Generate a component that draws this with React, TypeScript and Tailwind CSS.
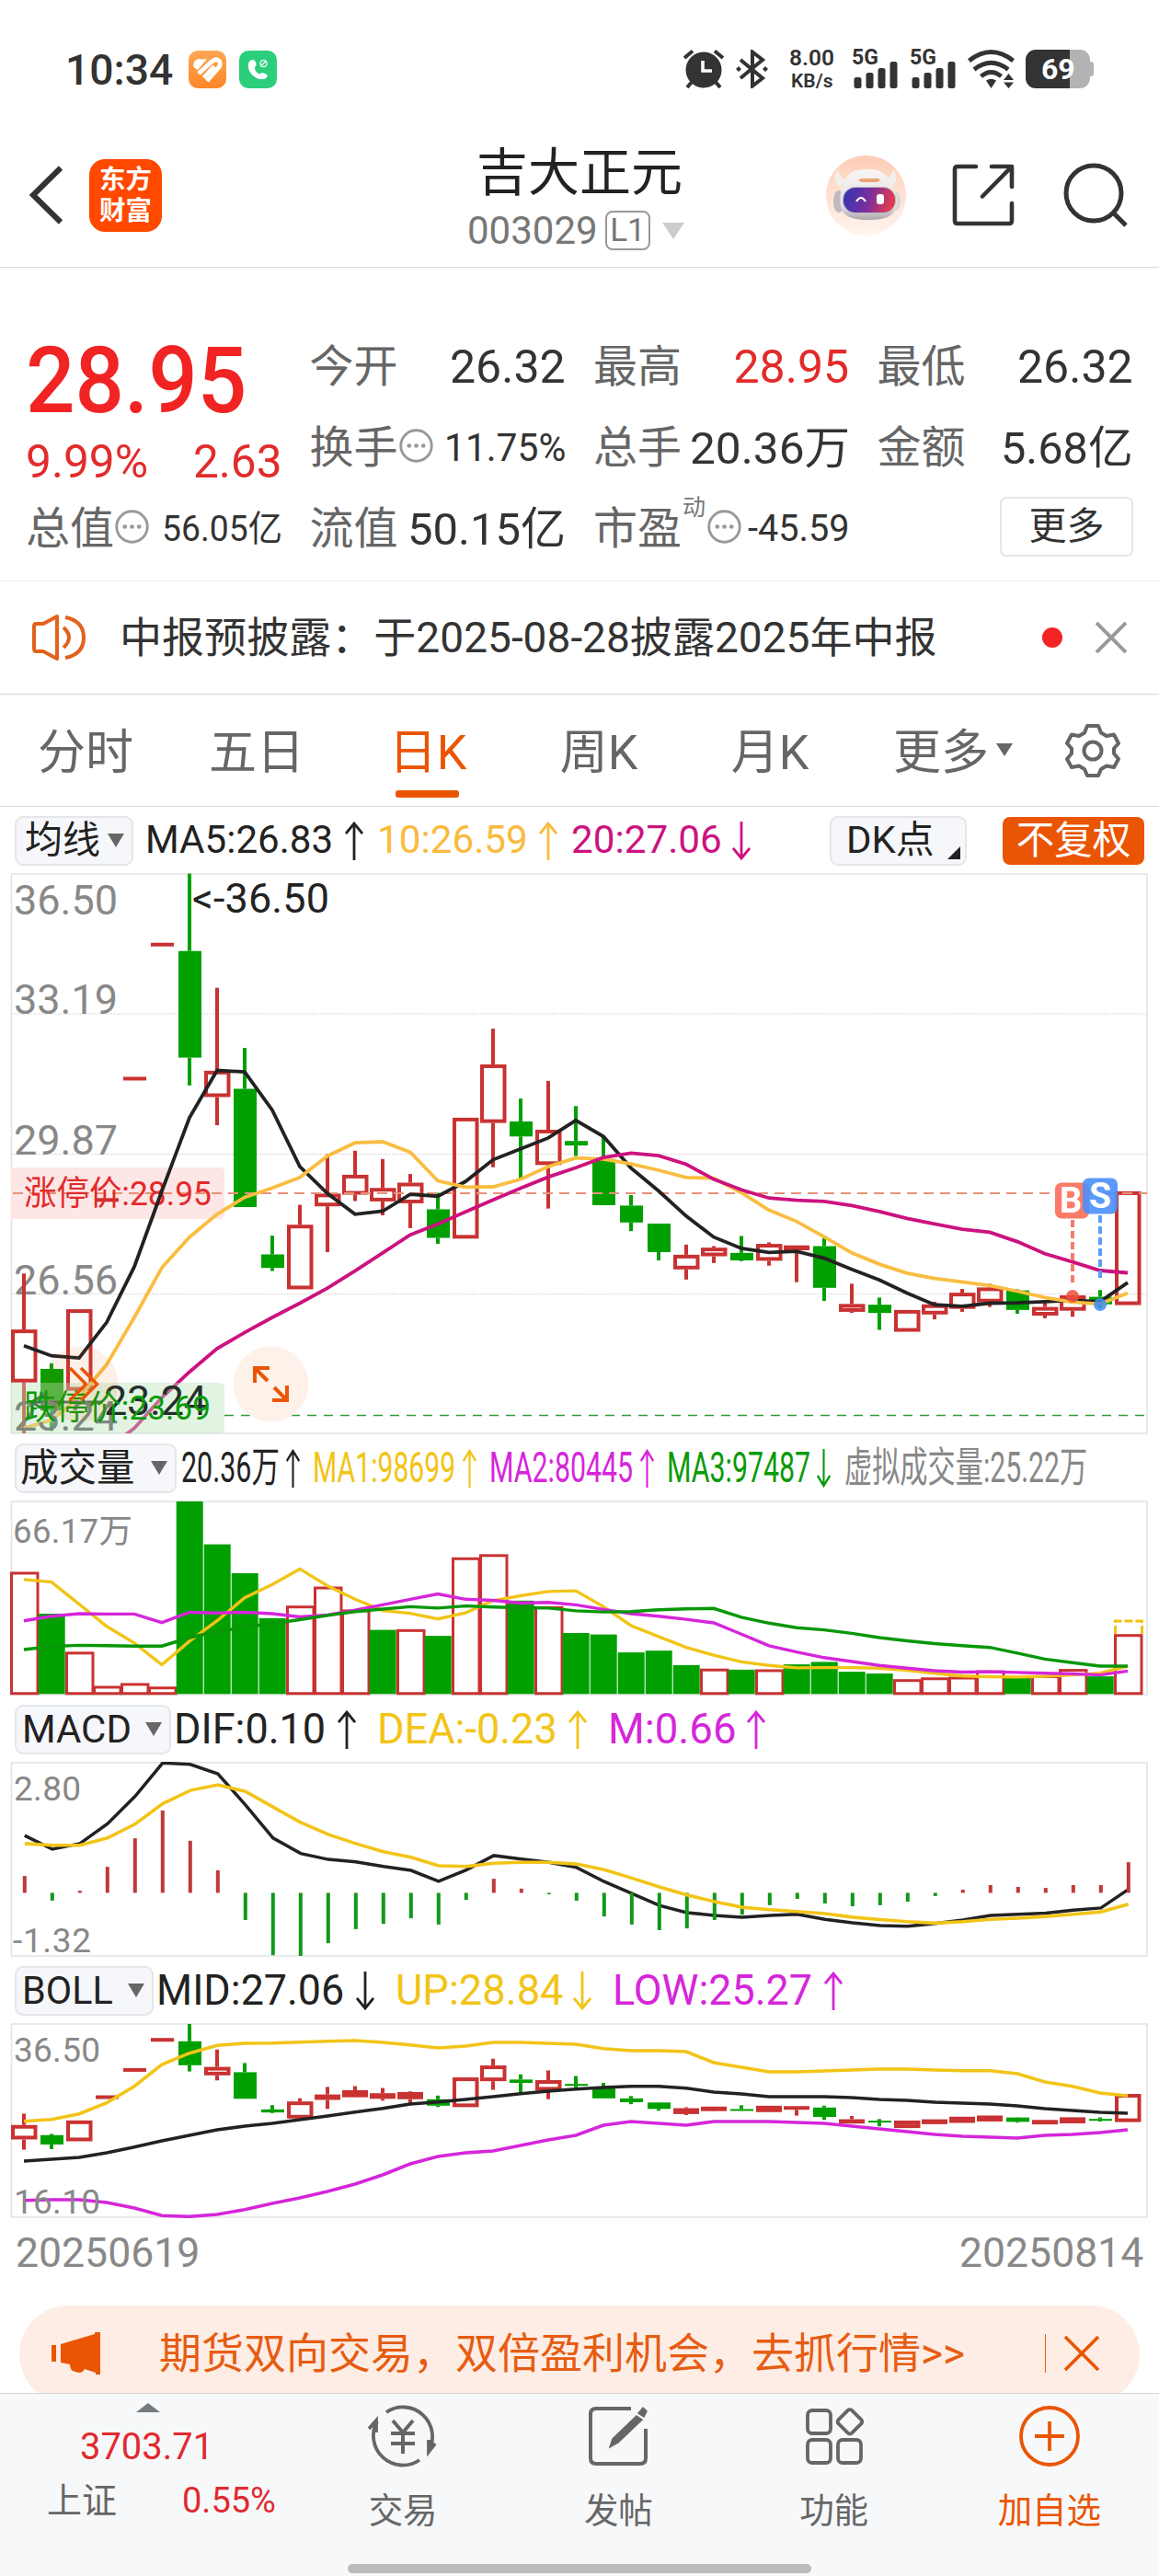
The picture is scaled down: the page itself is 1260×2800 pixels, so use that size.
import { ReactNode, useLayoutEffect, useRef, useState } from 'react';

type Candle = ['u' | 'd', number, number, number, number]; // direction, high, body top, body bottom, low

const RED = '#c93232';
const GREEN = '#00a000';

// Session i sits at x = 26 + 30i in every pane.
const cx = (i: number) => 26 + 30 * i;
const priceY = (v: number) => 930 + v / 2.45;
const volY = (v: number) => 1560 + v / 2.6133;
const bollY = (v: number) => 2130 + v / 3;

const CANDLES: Candle[] = [
  ['u', 1113, 1262, 1403, 1540], ['d', 1352, 1367, 1478, 1532], ['u', 1208, 1208, 1425, 1425],
  ['u', 917, 917, 917, 917], ['u', 594, 594, 594, 594], ['u', 237, 237, 237, 237],
  ['d', 48, 254, 538, 612], ['u', 352, 573, 643, 718], ['d', 512, 621, 936, 936],
  ['d', 1012, 1062, 1098, 1106], ['u', 930, 983, 1155, 1155], ['u', 795, 900, 934, 1056],
  ['u', 786, 850, 903, 920], ['u', 808, 885, 921, 958], ['u', 848, 871, 926, 992],
  ['d', 898, 942, 1018, 1034], ['u', 698, 698, 1020, 1020], ['u', 461, 556, 712, 830],
  ['d', 647, 708, 748, 862], ['u', 600, 730, 824, 940], ['d', 667, 760, 772, 800],
  ['d', 748, 808, 931, 931], ['d', 904, 932, 977, 1000], ['d', 980, 980, 1056, 1078],
  ['u', 1036, 1063, 1102, 1129], ['u', 1040, 1044, 1067, 1085], ['d', 1013, 1058, 1078, 1080],
  ['u', 1030, 1034, 1079, 1092], ['u', 1038, 1038, 1051, 1136], ['d', 1018, 1040, 1151, 1186],
  ['u', 1140, 1194, 1215, 1218], ['d', 1177, 1196, 1218, 1263], ['u', 1210, 1210, 1268, 1268],
  ['u', 1188, 1195, 1222, 1235], ['u', 1154, 1164, 1207, 1215], ['u', 1140, 1150, 1190, 1202],
  ['d', 1155, 1158, 1210, 1220], ['u', 1190, 1202, 1225, 1232], ['u', 1170, 1171, 1212, 1228],
  ['d', 1157, 1175, 1195, 1205], ['u', 894, 894, 1197, 1197],
];

const MA5 = [1305, 1332, 1338, 1243, 1095, 893, 698, 572, 576, 678, 828, 900, 955, 947, 902, 907, 868, 810, 781, 752, 705, 748, 832, 893, 960, 1016, 1046, 1057, 1054, 1072, 1102, 1130, 1165, 1196, 1200, 1192, 1191, 1188, 1184, 1188, 1137];
const MA10 = [1525, 1503, 1443, 1355, 1230, 1097, 1016, 955, 910, 885, 857, 800, 765, 762, 790, 866, 883, 882, 862, 828, 805, 808, 821, 838, 857, 859, 898, 944, 974, 1015, 1058, 1088, 1112, 1126, 1135, 1145, 1160, 1177, 1189, 1194, 1165];
const MA20 = [1760, 1680, 1630, 1580, 1525, 1443, 1375, 1313, 1270, 1230, 1192, 1152, 1106, 1058, 1010, 981, 949, 917, 886, 856, 831, 804, 792, 799, 822, 862, 890, 912, 918, 921, 932, 948, 966, 981, 995, 1003, 1028, 1060, 1082, 1105, 1111];

const VOLUME = [388, 507, 615, 712, 704, 714, 188, 310, 392, 520, 484, 430, 495, 553, 551, 570, 347, 338, 470, 486, 562, 566, 617, 612, 653, 663, 666, 665, 651, 644, 672, 677, 693, 688, 686, 668, 690, 682, 664, 685, 565];
// Sessions that closed below the previous close although the candle itself rose.
const DOWN_VOLUME = [7, 13, 24, 28, 30];
const VMA1 = [410, 417, 480, 543, 590, 652, 585, 527, 462, 424, 380, 428, 466, 498, 506, 522, 505, 470, 456, 444, 442, 487, 541, 572, 603, 625, 644, 654, 661, 660, 660, 662, 668, 676, 684, 686, 687, 685, 681, 676, 656];
const VMA2 = [527, 514, 507, 508, 508, 532, 503, 505, 503, 507, 516, 511, 497, 482, 466, 451, 466, 469, 477, 475, 482, 495, 507, 514, 523, 533, 565, 598, 616, 632, 643, 654, 662, 669, 673, 672, 674, 676, 678, 681, 670];
const VMA3 = [609, 600, 597, 598, 599, 599, 575, 558, 545, 535, 524, 512, 501, 494, 487, 491, 485, 488, 490, 491, 499, 502, 501, 496, 493, 492, 517, 534, 547, 553, 563, 575, 584, 592, 598, 603, 619, 636, 646, 656, 656];

const HIST = [1252, 1322, 1294, 1226, 1145, 1066, 1152, 1236, 1377, 1477, 1479, 1443, 1403, 1388, 1372, 1390, 1320, 1260, 1288, 1304, 1322, 1367, 1390, 1406, 1401, 1377, 1362, 1335, 1317, 1330, 1338, 1335, 1325, 1309, 1291, 1278, 1283, 1286, 1278, 1278, 1213];
const DIF = [1137, 1176, 1160, 1104, 1026, 931, 935, 962, 1050, 1144, 1188, 1205, 1212, 1225, 1236, 1267, 1235, 1194, 1204, 1213, 1228, 1268, 1302, 1336, 1356, 1364, 1369, 1364, 1361, 1375, 1385, 1393, 1395, 1387, 1377, 1364, 1361, 1358, 1349, 1343, 1290];
const DEA = [1160, 1165, 1165, 1144, 1105, 1047, 1009, 993, 1012, 1056, 1100, 1134, 1160, 1183, 1199, 1223, 1225, 1216, 1213, 1213, 1218, 1234, 1258, 1283, 1306, 1325, 1341, 1348, 1353, 1359, 1369, 1376, 1382, 1386, 1382, 1375, 1372, 1367, 1361, 1354, 1332];

const MID = [657, 651, 645, 630, 611, 591, 573, 555, 543, 534, 522, 510, 497, 485, 471, 464, 456, 447, 437, 429, 422, 417, 413, 413, 419, 432, 438, 447, 447, 447, 450, 456, 459, 465, 468, 471, 477, 486, 492, 498, 501];
const UP = [527, 521, 503, 467, 413, 342, 305, 280, 273, 272, 269, 266, 264, 270, 278, 288, 282, 270, 270, 273, 276, 290, 297, 297, 300, 336, 351, 366, 366, 363, 360, 357, 357, 360, 362, 362, 372, 399, 413, 435, 444];
const LOW = [785, 783, 783, 792, 810, 835, 838, 831, 815, 795, 777, 756, 732, 702, 666, 642, 630, 624, 606, 588, 573, 540, 528, 534, 540, 528, 528, 528, 531, 534, 543, 552, 561, 570, 576, 579, 582, 573, 570, 564, 555];

// Text stretched or squeezed horizontally to the width of its box.
function Fit({ className, children }: { className: string; children: ReactNode }) {
  const outer = useRef<HTMLDivElement>(null);
  const inner = useRef<HTMLSpanElement>(null);
  const [scale, setScale] = useState(1);

  useLayoutEffect(() => {
    if (!outer.current || !inner.current) return;
    setScale(outer.current.clientWidth / inner.current.offsetWidth);
  }, [children]);

  return (
    <div ref={outer} className={`shrink-0 leading-none whitespace-nowrap ${className}`}>
      <span ref={inner} className="inline-block origin-left" style={{ transform: `scaleX(${scale})` }}>
        {children}
      </span>
    </div>
  );
}

function Arrow({ down, className }: { down?: boolean; className: string }) {
  return (
    <svg viewBox="0 0 20 42" preserveAspectRatio="none" className={`shrink-0 h-[42px] ${className}`} fill="none" stroke="currentColor" strokeWidth="2.8">
      <path d={down ? 'M10 0V40M1 29L10 40L19 29' : 'M10 42V2M1 13L10 2L19 13'} />
    </svg>
  );
}

function Line({ data, y, color, width = 3.8, dx = 0 }: { data: number[]; y: (v: number) => number; color: string; width?: number; dx?: number }) {
  const points = data.map((v, i) => `${cx(i) + dx},${y(v).toFixed(1)}`).join(' ');
  return <polyline points={points} fill="none" stroke={color} strokeWidth={width} />;
}

function Candles({ y, grow = 0 }: { y: (v: number) => number; grow?: number }) {
  return (
    <>
      {CANDLES.map(([dir, hi, top, bot, lo], i) => {
        const x = cx(i);
        const color = dir === 'u' ? RED : GREEN;
        const pad = dir === 'u' ? grow : 0;
        const t = y(top) - pad;
        const b = y(bot) + pad;
        if (hi === lo) return <rect key={i} x={x - 12} y={y(top) - 2} width={25} height={4} fill={color} />;
        const hollow = dir === 'u' && b - t > 8;
        return (
          <g key={i}>
            <rect x={x - 2} y={y(hi)} width={4} height={Math.max(t - y(hi), 0)} fill={color} />
            <rect x={x - 2} y={b} width={4} height={Math.max(y(lo) - b, 0)} fill={color} />
            {hollow ? (
              <rect x={x - 12} y={t + 2} width={24.5} height={b - t - 4} fill="none" stroke={color} strokeWidth={4} />
            ) : (
              <rect x={dir === 'u' ? x - 14 : x - 12} y={t} width={dir === 'u' ? 28 : 25} height={Math.max(b - t, 2)} fill={color} />
            )}
          </g>
        );
      })}
    </>
  );
}

function PriceChart() {
  const rows = [1102, 1254.5, 1406.5];
  return (
    <svg viewBox="0 949 1260 610" className="block w-[1260px] h-[610px] font-[Roboto,'Noto_Sans_CJK_SC',sans-serif]">
      <clipPath id="price"><rect x="12" y="949" width="1236" height="609" /></clipPath>
      <rect x="12.5" y="950" width="1234.5" height="608" fill="none" stroke="#e2e2e2" strokeWidth="1.5" />
      {rows.map(y => (
        <line key={y} x1="12" x2="1248" y1={y} y2={y} stroke="#cccccc" strokeWidth="1.2" strokeDasharray="1.5 1.5" />
      ))}
      <g fontSize="45" fill="#888888">
        <text x="15" y="994" textLength="113">36.50</text>
        <text x="15" y="1102" textLength="113">33.19</text>
        <text x="15" y="1254.5" textLength="113">29.87</text>
        <text x="15" y="1406.5" textLength="113">26.56</text>
      </g>
      <g clipPath="url(#price)">
        <path d="M12 1269H239a5 5 0 0 1 5 5V1320a5 5 0 0 1-5 5H12Z" fill="#fde6e6" />
        <Candles y={priceY} />
        <line x1="14" x2="1247" y1="1297" y2="1297" stroke="#e8917a" strokeWidth="1.8" strokeDasharray="11 7" />
        <line x1="244" x2="1247" y1="1538.5" y2="1538.5" stroke="#2f9d3a" strokeWidth="1.4" strokeDasharray="10 8" />
        <text x="26" y="1310" fontSize="37" fill="#e22a2a" textLength="204" lengthAdjust="spacingAndGlyphs">涨停价:28.95</text>
        <Line data={MA5} y={priceY} color="#222222" />
        <Line data={MA10} y={priceY} color="#f9bd40" />
        <Line data={MA20} y={priceY} color="#cc127f" />
        <g fill="none" stroke="#222222" strokeWidth="3"><path d="M34 1524H112M50 1515L34 1524L50 1533" /></g>
        <path d="M12 1503H239a5 5 0 0 1 5 5V1553a5 5 0 0 1-5 5H12Z" fill="#b9e2bb" fillOpacity=".42" />
        <text x="15" y="1554.5" fontSize="45" fill="#7d8a7e" textLength="113">23.24</text>
        <text x="113" y="1538" fontSize="45" fill="#22302a" textLength="112">23.24</text>
        <text x="26" y="1542.5" fontSize="37" fill="#0a9a0a" textLength="203" lengthAdjust="spacingAndGlyphs">跌停价:23.69</text>
      </g>
      <text x="209" y="992" fontSize="45" fill="#222222" textLength="149">{'<-36.50'}</text>
      <circle cx="87.5" cy="1504.5" r="41" fill="#ea5504" fillOpacity=".09" />
      <path d="M76 1487L93.5 1504.5L76 1522M88 1487L105.5 1504.5L88 1522" fill="none" stroke="#ea5504" strokeWidth="3.4" />
      <circle cx="294.5" cy="1504.5" r="41" fill="#fef1ea" />
      <g fill="none" stroke="#ea5504" strokeWidth="4">
        <path d="M277 1503V1487H293M277.5 1487.5L291 1501" />
        <path d="M312 1506V1522H296M311.5 1521.5L298 1508" />
      </g>
      {/* Buy and sell markers */}
      <line x1="1166" x2="1166" y1="1326" y2="1395" stroke="#f57c6c" strokeWidth="4" strokeDasharray="8 4" />
      <circle cx="1166" cy="1409" r="7" fill="#f0503c" fillOpacity=".85" />
      <rect x="1147" y="1285.5" width="37" height="39" rx="7" fill="#fb7b69" />
      <text x="1152" y="1318" fontSize="38" fontWeight="bold" fill="#ffffff">B</text>
      <line x1="1196" x2="1196" y1="1321" y2="1389" stroke="#5c9df8" strokeWidth="4" strokeDasharray="8 4" />
      <circle cx="1196" cy="1418" r="7" fill="#3f8cf0" fillOpacity=".85" />
      <rect x="1177" y="1280.5" width="38" height="39" rx="7" fill="#4a8ff8" fillOpacity=".9" />
      <text x="1196" y="1313" fontSize="39" fontWeight="bold" fill="#ffffff" textAnchor="middle">S</text>
    </svg>
  );
}

function VolumeChart() {
  const base = volY(735);
  return (
    <svg viewBox="0 1631 1260 212" className="block w-[1260px] h-[212px] font-[Roboto,'Noto_Sans_CJK_SC',sans-serif]">
      <rect x="12.5" y="1632" width="1234.5" height="210" fill="none" stroke="#e2e2e2" strokeWidth="1.5" />
      <text x="14" y="1677" fontSize="36.5" fill="#888888" textLength="130">66.17万</text>
      {VOLUME.map((v, i) => {
        const y = volY(v);
        return CANDLES[i][0] === 'u' && !DOWN_VOLUME.includes(i) ? (
          <rect key={i} x={cx(i) - 13.5} y={y + 1.5} width={28.5} height={base - y - 2} fill="#ffffff" stroke={RED} strokeWidth={3} />
        ) : (
          <rect key={i} x={cx(i) - 14.3} y={y} width={29} height={base - y} fill={GREEN} />
        );
      })}
      <path d="M1212.5 1776V1762H1241.5V1776" fill="none" stroke="#f2c20f" strokeWidth="3" strokeDasharray="9 3" />
      <Line data={VMA1} y={volY} color="#f2c417" width={3.4} />
      <Line data={VMA2} y={volY} color="#d526da" width={3.4} />
      <Line data={VMA3} y={volY} color="#089708" width={3.4} />
    </svg>
  );
}

function MacdChart() {
  return (
    <svg viewBox="0 1915 1260 212" className="block w-[1260px] h-[212px] font-[Roboto,sans-serif]">
      <rect x="12.5" y="1916" width="1234.5" height="210" fill="none" stroke="#e2e2e2" strokeWidth="1.5" />
      <text x="15" y="1956.5" fontSize="37" fill="#888888" textLength="73">2.80</text>
      <text x="14" y="2121.5" fontSize="37" fill="#888888" textLength="85">-1.32</text>
      <Line data={DIF} y={volY} color="#222222" width={3.5} dx={0.8} />
      {HIST.map((v, i) => (
        <rect
          key={i}
          x={cx(i) - 1.2}
          y={Math.min(volY(v), volY(1300))}
          width={4}
          height={Math.abs(volY(v) - volY(1300))}
          fill={v < 1300 ? '#bd3a38' : '#12981a'}
        />
      ))}
      <Line data={DEA} y={volY} color="#f2c417" width={3.6} dx={0.8} />
    </svg>
  );
}

function BollChart() {
  // Same candles on the wider 16.10 - 36.50 range.
  const y = (v: number) => 2200 + (priceY(v) - 950) * 0.2245;
  return (
    <svg viewBox="0 2199 1260 212" className="block w-[1260px] h-[212px] font-[Roboto,sans-serif]">
      <rect x="12.5" y="2200" width="1234.5" height="210" fill="none" stroke="#e2e2e2" strokeWidth="1.5" />
      <Candles y={y} grow={1.4} />
      <Line data={MID} y={bollY} color="#222222" width={3.6} />
      <Line data={UP} y={bollY} color="#f2c417" width={3.6} />
      <Line data={LOW} y={bollY} color="#d526da" width={3.6} />
      <text x="15" y="2240.5" fontSize="37" fill="#888888" textLength="94">36.50</text>
      <text x="15" y="2405.5" fontSize="37" fill="#888888" textLength="94">16.10</text>
    </svg>
  );
}

function StatusBar() {
  return (
    <div className="flex items-center h-[150px] text-[#333333]">
      <Fit className="ml-[71px] w-[117px] text-[47px] font-medium">10:34</Fit>
      <svg viewBox="0 0 41 41" className="ml-[17px] w-[41px] h-[41px]">
        <defs>
          <linearGradient id="or" x1="0" y1="0" x2="0" y2="1"><stop offset="0" stopColor="#fda755" /><stop offset="1" stopColor="#fb8626" /></linearGradient>
        </defs>
        <rect width="41" height="41" rx="10" fill="url(#or)" />
        <g fill="none" stroke="#ffffff" strokeWidth="4.8">
          <path d="M5.500 18C4 11 10 7.500 15 9.500L20 9L10 21Z" fill="#ffffff" stroke="none" />
          <path d="M11 25L25 12C31 7 37 12 33 18L20 33" />
          <path d="M16.500 29.500L28 17" />
        </g>
      </svg>
      <svg viewBox="0 0 41 41" className="ml-[14px] w-[41px] h-[41px]">
        <rect width="41" height="41" rx="10" fill="#2bce7b" />
        <path d="M12 11C9 13 9 20 13 25C17 30 24 33 29 30C31 28 31 27 30 26L26 24C24 23.5 23 26 21 25C18 23 17 21 17 19C17 17 19 17 18.5 14L17 11C16 9.500 13 10 12 11Z" fill="#ffffff" />
        <circle cx="26.5" cy="14" r="3.6" fill="none" stroke="#ffffff" strokeWidth="1.3" />
        <path d="M24 16.5L29 11.5" stroke="#ffffff" strokeWidth="1.3" />
      </svg>
      <svg viewBox="743 54 44 42" className="ml-[442px] w-[44px] h-[42px] shrink-0">
        <circle cx="765" cy="76" r="19.5" fill="#333333" />
        <g fill="none" stroke="#333333" strokeWidth="4"><path d="M744 63L753 55.5M777 55.5L786 63M753 88L747 95M777 88L783 95" /></g>
        <path d="M764 66V77H774" fill="none" stroke="#ffffff" strokeWidth="3.6" />
      </svg>
      <svg viewBox="799 54 37 42" className="ml-[12px] w-[37px] h-[42px] shrink-0" fill="none" stroke="#333333" strokeWidth="4">
        <path d="M805 65L829 85L818 93.5V56.5L829 65L805 85" />
        <path d="M800 75L803 72L806 75L803 78ZM829 75L832 72L835 75L832 78Z" fill="#333333" stroke="none" />
      </svg>
      <div className="ml-[22px] flex flex-col items-center gap-[3px]">
        <Fit className="w-[49px] text-[24px] font-semibold">8.00</Fit>
        <Fit className="w-[45px] text-[21px] font-semibold">KB/s</Fit>
      </div>
      <Signal className="ml-[19px]" />
      <Signal className="ml-[12px]" />
      <svg viewBox="1052 54 53 42" className="ml-[11px] w-[53px] h-[42px] shrink-0" fill="none" stroke="#333333" strokeWidth="4.8">
        <path d="M1054.5 66Q1078.5 47 1102.5 66M1060 75.5Q1078.5 61 1097 75.5M1067.5 83Q1078.5 74 1089.5 83" />
        <path d="M1073 87.5Q1078.5 84 1084 87.5L1078.5 96ZM1092 87L1097.5 80L1103 87ZM1092 89.5H1103L1097.5 96Z" fill="#333333" stroke="none" />
      </svg>
      <div className="relative ml-[11px] w-[74px] h-[42px] shrink-0 flex items-center">
        <div className="w-[70px] h-[42px] rounded-[11px] overflow-hidden flex">
          <div className="w-[48px] bg-[#333333]" />
          <div className="flex-1 bg-[#b3b3b3]" />
        </div>
        <div className="w-[4px] h-[16px] rounded-r-[3px] bg-[#b3b3b3]" />
        <span className="absolute left-[17px] top-[5px] text-[32px] leading-none font-bold text-white">69</span>
      </div>
    </div>
  );
}

function Signal({ className }: { className: string }) {
  return (
    <div className={`relative flex items-end w-[51px] h-[42px] shrink-0 ${className}`}>
      <Fit className="absolute left-0 -top-[3px] w-[29px] text-[23px] font-bold">5G</Fit>
      <svg viewBox="0 13 51 29" className="w-[51px] h-[29px]" fill="#333333">
        <rect x="2.5" y="30" width="8" height="12" rx="2.5" />
        <rect x="15.5" y="25" width="8" height="17" rx="2.5" />
        <rect x="28.5" y="20" width="8" height="22" rx="2.5" />
        <rect x="41.5" y="13" width="8" height="29" rx="2.5" />
      </svg>
    </div>
  );
}

function Robot() {
  return (
    <svg viewBox="0 0 87 87" className="w-[87px] h-[87px] shrink-0">
      <defs>
        <linearGradient id="halo" x1="0" y1="0" x2="0" y2="1"><stop offset="0" stopColor="#fecdb5" /><stop offset="1" stopColor="#fff5f0" /></linearGradient>
        <linearGradient id="visor" x1="0" y1="0" x2="1" y2=".15"><stop offset="0" stopColor="#2b36b4" /><stop offset=".55" stopColor="#7b2f9c" /><stop offset="1" stopColor="#e03a50" /></linearGradient>
        <linearGradient id="shell" x1="0" y1="0" x2="0" y2="1"><stop offset="0" stopColor="#f8f5f4" /><stop offset=".75" stopColor="#e2dfe0" /><stop offset="1" stopColor="#aaa6aa" /></linearGradient>
      </defs>
      <circle cx="43.5" cy="43.5" r="43.5" fill="url(#halo)" />
      <path d="M13 15C8 22 8 30 15 34L24 26C18 26 14 22 13 15ZM73 15C78 22 78 30 71 34L62 26C68 26 72 22 73 15Z" fill="#f5efec" />
      <ellipse cx="14" cy="50" rx="6" ry="12" fill="#bdb9bd" />
      <ellipse cx="76" cy="50" rx="5" ry="10" fill="#dcd6d8" />
      <path d="M22 24C26 18 32 15 46 15S65 20 69 27C74 36 78 44 77 54C75 67 62 70 47 70S19 68 16 56C14 45 17 32 22 24Z" fill="url(#shell)" />
      <path d="M35 27L38 25H57L59 27L56 29H38Z" fill="#eca574" />
      <rect x="18" y="34" width="58" height="29" rx="14" fill="#bfb6c4" />
      <rect x="19" y="35" width="56" height="27" rx="13" fill="url(#visor)" />
      <path d="M33 50Q38 42 43 50" fill="none" stroke="#ffffff" strokeWidth="2.2" />
      <rect x="55" y="42" width="8" height="11" rx="3" fill="#ffffff" />
    </svg>
  );
}

function Header() {
  return (
    <div className="flex items-center h-[141px] pb-[16px] border-b border-[#d8d8d8]">
      <svg viewBox="0 0 38 64" className="ml-[31px] w-[38px] h-[64px] shrink-0" fill="none" stroke="#333333" strokeWidth="6">
        <path d="M35 2.5L5 32L35 61.5" />
      </svg>
      <div className="ml-[28px] w-[79px] h-[79px] pt-[1px] shrink-0 rounded-[17px] bg-[#ff4800] flex flex-col items-center justify-center text-white font-bold text-[28.5px] leading-[34px]">
        <span>东方</span>
        <span>财富</span>
      </div>
      <div className="ml-[330px] pt-[6px] w-[248px] flex flex-col items-center shrink-0">
        <div className="h-[62px] flex items-center text-[56px] leading-none text-[#222222]">吉大正元</div>
        <div className="h-[46px] mt-[9px] w-full flex items-center text-[#777777]">
          <Fit className="ml-[2px] w-[142px] text-[42px]">003029</Fit>
          <div className="ml-[8px] w-[49px] h-[43px] shrink-0 border-2 border-[#999999] rounded-[8px] flex items-center justify-center text-[35px] leading-none">L1</div>
          <svg viewBox="0 0 26 18" className="ml-[12px] w-[26px] h-[18px] shrink-0"><path d="M1 0H25L13 18Z" fill="#cccccc" /></svg>
        </div>
      </div>
      <div className="ml-[144px] flex items-center"><Robot /></div>
      <svg viewBox="0 0 68 68" className="ml-[50px] w-[68px] h-[68px] shrink-0" fill="none" stroke="#333333" strokeWidth="4.6" strokeLinecap="round" strokeLinejoin="round">
        <path d="M26 3H6Q3 3 3 6V62Q3 65 6 65H62Q65 65 65 62V43M43 3H65V25M64 4L33 35.5" />
      </svg>
      <svg viewBox="0 0 70 70" className="ml-[53px] w-[70px] h-[70px] shrink-0" fill="none" stroke="#333333" strokeWidth="5">
        <circle cx="33" cy="33" r="30" />
        <path d="M54 54L68 68" />
      </svg>
    </div>
  );
}

function Dots() {
  return (
    <svg viewBox="0 0 36 36" className="w-[37px] h-[37px] mb-[4px] ml-[1px] shrink-0">
      <circle cx="18" cy="18" r="16.3" fill="none" stroke="#999999" strokeWidth="2.8" />
      <g fill="#999999"><circle cx="10.5" cy="18" r="2.3" /><circle cx="18" cy="18" r="2.3" /><circle cx="25.5" cy="18" r="2.3" /></g>
    </svg>
  );
}

function Stat({ label, dots, sup, children }: { label: string; dots?: boolean; sup?: string; children: ReactNode }) {
  return (
    <div className="flex items-center h-[88px]">
      <span className="text-[48px] leading-none text-[#666666] shrink-0 pt-[2px]">{label}</span>
      {sup && <span className="w-[27px] pl-[1px] text-[25px] leading-none text-[#777777] pb-[46px] shrink-0">{sup}</span>}
      {dots && <Dots />}
      <div className="ml-auto text-[#333333]">{children}</div>
    </div>
  );
}

function Quote() {
  return (
    <div className="grid grid-cols-4 gap-x-[30px] h-[341px] pt-[63px] px-[28px] content-start border-b border-[#ebebeb]">
      <div className="row-span-2 text-[#f12323]">
        <div className="h-[120px] flex items-center">
          <Fit className="w-[240px] text-[100px] font-medium">28.95</Fit>
        </div>
        <div className="h-[56px] flex items-center justify-between text-[#e22b2b]">
          <Fit className="w-[133px] text-[50px]">9.99%</Fit>
          <Fit className="w-[97px] text-[50px]">2.63</Fit>
        </div>
      </div>
      <Stat label="今开"><Fit className="w-[126px] text-[50px] pt-[1px]">26.32</Fit></Stat>
      <Stat label="最高"><Fit className="w-[126px] text-[50px] pt-[1px] text-[#e22b2b]">28.95</Fit></Stat>
      <Stat label="最低"><Fit className="w-[126px] text-[50px] pt-[1px]">26.32</Fit></Stat>
      <Stat label="换手" dots><Fit className="w-[132px] text-[42px] pt-[2px]">11.75%</Fit></Stat>
      <Stat label="总手"><Fit className="w-[174px] text-[49px] pt-[2px]">20.36万</Fit></Stat>
      <Stat label="金额"><Fit className="w-[144px] text-[49px] pt-[2px]">5.68亿</Fit></Stat>
      <Stat label="总值" dots><Fit className="w-[131px] text-[39px] pt-[2px]">56.05亿</Fit></Stat>
      <Stat label="流值"><Fit className="w-[172px] text-[49px] pt-[2px]">50.15亿</Fit></Stat>
      <Stat label="市盈" sup="动" dots><Fit className="w-[111px] text-[40px] pt-[2px]">-45.59</Fit></Stat>
      <div className="h-[88px] flex items-center justify-end pb-[3px]">
        <div className="w-[145px] h-[65px] border-2 border-[#e6e6e6] rounded-[7px] flex items-center justify-center text-[41px] leading-none text-[#333333]">更多</div>
      </div>
    </div>
  );
}

function Notice() {
  return (
    <div className="flex items-center h-[123px] border-b border-[#d8d8d8]">
      <svg viewBox="0 0 60 52" className="ml-[34px] w-[60px] h-[52px] shrink-0" fill="none" stroke="#e2621b" strokeWidth="4">
        <path d="M5 11H13L28 3V49L13 41H5Q3 41 3 38V14Q3 11 5 11Z" strokeLinejoin="round" />
        <path d="M35 15Q47 26 35 37M37 4Q57 8 57 26T37 48" />
      </svg>
      <Fit className="ml-[36px] w-[889px] text-[46px] text-[#333333]">中报预披露：于2025-08-28披露2025年中报</Fit>
      <div className="ml-[114px] w-[22px] h-[22px] rounded-full bg-[#f32424]" />
      <svg viewBox="0 0 34 34" className="ml-[36px] w-[34px] h-[34px]" stroke="#999999" strokeWidth="4"><path d="M1 1L33 33M33 1L1 33" /></svg>
    </div>
  );
}

const TABS = ['分时', '五日', '日K', '周K', '月K', '更多'];

function Tabs() {
  return (
    <div className="flex items-center h-[122px] border-b border-[#d8d8d8] text-[52px] leading-none text-[#666666]">
      {TABS.map(t => (
        <div key={t} className={`relative w-[186px] h-full shrink-0 flex items-center justify-center pt-[6px] ${t === '日K' ? 'text-[#ea5504]' : ''}`}>
          {t}
          {t === '日K' && <div className="absolute left-[58px] bottom-[9px] w-[69px] h-[8px] rounded-[3px] bg-[#ea5504]" />}
          {t === '更多' && (
            <svg viewBox="0 0 18 14" className="absolute left-[153px] top-[53px] w-[18px] h-[14px]"><path d="M0 0H18L9 14Z" fill="#666666" /></svg>
          )}
        </div>
      ))}
      <svg viewBox="-30 -30 60 60" className="ml-[42px] w-[60px] h-[60px] shrink-0" fill="none" stroke="#666666" strokeWidth="4">
        <path d="M-6 -27H6L9 -19.5L15 -16L23 -17.5L28 -8L23 -2.5V3L28 9L23 18L15 16.5L9 20L6 27H-6L-9 20L-15 16.5L-23 18L-28 9L-23 3V-2.5L-28 -8L-23 -17.5L-15 -16L-9 -19.5Z" strokeLinejoin="round" />
        <circle r="9.5" />
      </svg>
    </div>
  );
}

function Picker({ className, children }: { className: string; children: ReactNode }) {
  return (
    <div className={`flex items-center justify-between shrink-0 h-[54px] ml-[16px] pr-[8px] border-2 border-[#e4e6ea] bg-[#f6f7fa] rounded-[9px] text-[#222222] ${className}`}>
      {children}
      <svg viewBox="0 0 18 15" className="w-[18px] h-[15px] shrink-0"><path d="M0 0H18L9 15Z" fill="#666666" /></svg>
    </div>
  );
}

function AverageRow() {
  return (
    <div className="flex items-center h-[72px] pt-[1px] text-[42.5px]">
      <Picker className="w-[129px] pl-[9px]"><span className="text-[41px] leading-none">均线</span></Picker>
      <Fit className="ml-[13px] w-[204px] text-[#222222]">MA5:26.83</Fit>
      <Arrow className="ml-[13px] w-[20px] text-[#222222]" />
      <Fit className="ml-[15px] w-[164px] text-[#f9bb3d]">10:26.59</Fit>
      <Arrow className="ml-[12px] w-[20px] text-[#f9bb3d]" />
      <Fit className="ml-[15px] w-[164px] text-[#cc127f]">20:27.06</Fit>
      <Arrow down className="ml-[11px] w-[20px] text-[#cc127f]" />
      <div className="relative ml-[86px] w-[149px] h-[54px] shrink-0 border-2 border-[#e4e6ea] bg-[#f6f7fa] rounded-[9px] flex items-center pl-[16px]">
        <Fit className="w-[96px] text-[41px] text-[#222222]">DK点</Fit>
        <svg viewBox="0 0 14 14" className="absolute right-[5px] bottom-[5px] w-[14px] h-[14px]"><path d="M14 0V14H0Z" fill="#222222" /></svg>
      </div>
      <div className="ml-[39px] w-[154px] h-[52px] shrink-0 rounded-[8px] bg-[#ea5504] text-white text-[41.5px] leading-none flex items-center justify-center">不复权</div>
    </div>
  );
}

function VolumeRow() {
  return (
    <div className="flex items-center h-[72px] pt-[1px] text-[45.5px]">
      <Picker className="w-[176px] pl-[4px]"><span className="text-[41.5px] leading-none">成交量</span></Picker>
      <Fit className="ml-[5px] w-[107px] text-[#222222]">20.36万</Fit>
      <Arrow className="ml-[7px] w-[15px] text-[#222222]" />
      <Fit className="ml-[14px] w-[155px] text-[#f2c417]">MA1:98699</Fit>
      <Arrow className="ml-[8px] w-[15px] text-[#f2c417]" />
      <Fit className="ml-[14px] w-[156px] text-[#d526da]">MA2:80445</Fit>
      <Arrow className="ml-[8px] w-[15px] text-[#d526da]" />
      <Fit className="ml-[14px] w-[156px] text-[#0a9a0a]">MA3:97487</Fit>
      <Arrow down className="ml-[7px] w-[15px] text-[#0a9a0a]" />
      <Fit className="ml-[15px] w-[264px] text-[#888888]">虚拟成交量:25.22万</Fit>
    </div>
  );
}

function MacdRow() {
  return (
    <div className="flex items-center h-[72px] pt-px text-[45.5px]">
      <Picker className="w-[170px] pl-[6px]"><Fit className="w-[119px] text-[43px]">MACD</Fit></Picker>
      <Fit className="ml-[3px] w-[165px] text-[#222222]">DIF:0.10</Fit>
      <Arrow className="ml-[13px] w-[20px] text-[#222222]" />
      <Fit className="ml-[23px] w-[196px] text-[#f2c417]">DEA:-0.23</Fit>
      <Arrow className="ml-[12px] w-[20px] text-[#f2c417]" />
      <Fit className="ml-[23px] w-[139px] text-[#d526da]">M:0.66</Fit>
      <Arrow className="ml-[12px] w-[20px] text-[#d526da]" />
    </div>
  );
}

function BollRow() {
  return (
    <div className="flex items-center h-[72px] pt-[1px] text-[45.5px]">
      <Picker className="w-[151px] pl-[6px]"><Fit className="w-[99px] text-[43px]">BOLL</Fit></Picker>
      <Fit className="ml-[3px] w-[204px] text-[#222222]">MID:27.06</Fit>
      <Arrow down className="ml-[13px] w-[20px] text-[#222222]" />
      <Fit className="ml-[23px] w-[183px] text-[#f2c417]">UP:28.84</Fit>
      <Arrow down className="ml-[10px] w-[20px] text-[#f2c417]" />
      <Fit className="ml-[23px] w-[217px] text-[#d526da]">LOW:25.27</Fit>
      <Arrow className="ml-[13px] w-[20px] text-[#d526da]" />
    </div>
  );
}

function Banner() {
  return (
    <div className="h-[95px] overflow-hidden">
      <div className="flex items-center mx-[21px] h-[106px] pb-[3px] rounded-full bg-[#fdede4] text-[#e65c12]">
        <svg viewBox="0 0 54 46" className="ml-[35px] w-[54px] h-[46px] shrink-0" fill="#ea5504">
          <path d="M0 14H5V32H0ZM10 13L47 2V0H53V46H48V44L36 40Q33 46 26 43Q20 42 20 35L10 33Z" />
        </svg>
        <Fit className="ml-[63px] w-[876px] text-[46px] pt-[1px]">{'期货双向交易，双倍盈利机会，去抓行情>>'}</Fit>
        <div className="ml-[87px] w-[1px] h-[42px] bg-[#e65c12]" />
        <svg viewBox="0 0 38 38" className="ml-[20px] w-[38px] h-[38px]" stroke="#ea5504" strokeWidth="3.6"><path d="M1 1L37 37M37 1L1 37" /></svg>
      </div>
    </div>
  );
}

function NavItem({ label, className = 'text-[#666666]', children }: { label: string; className?: string; children: ReactNode }) {
  return (
    <div className={`flex-1 flex flex-col items-center pt-[12px] ${className}`}>
      <svg viewBox="-38 -34 76 68" className="w-[76px] h-[68px]" fill="none" stroke="currentColor" strokeWidth="3.8">{children}</svg>
      <span className="mt-[29px] text-[37.5px] leading-none">{label}</span>
    </div>
  );
}

function BottomNav() {
  return (
    <div className="relative flex h-[199px] pr-[2px] bg-[#f7f8fa] border-t border-[#d3d4d6]">
      <div className="w-[321px] shrink-0">
        <svg viewBox="0 0 26 10" className="ml-[148px] mt-[10px] w-[26px] h-[10px]"><path d="M13 0L26 10H0Z" fill="#777980" /></svg>
        <Fit className="ml-[87px] mt-[17px] w-[145px] text-[41px] text-[#e02a2e]">3703.71</Fit>
        <div className="mt-[19px] flex items-center">
          <span className="ml-[51px] text-[38px] leading-none text-[#666666]">上证</span>
          <Fit className="ml-[71px] w-[102px] text-[38px] text-[#e02a2e]">0.55%</Fit>
        </div>
      </div>
      <NavItem label="交易">
        <path d="M-18 -26A32 32 0 0 1 28 16M35 8L28 17L28 4M18 26A32 32 0 0 1 -28 -16M-37 -8L-29 -17V-4" />
        <path d="M-11 -17L0 -4L11 -17M0 -4V19M-13 -3H13M-13 8H13" strokeWidth="4" />
      </NavItem>
      <NavItem label="发帖">
        <path d="M14 -30H-24Q-30 -30 -30 -24V24Q-30 30 -24 30H24Q30 30 30 24V-8" strokeWidth="4" />
        <path d="M27 -31L31 -27L28 -21L22 -25ZM20 -22L26 -18L0 7L-9 12L-6 3Z" fill="currentColor" stroke="currentColor" strokeWidth="1.5" />
      </NavItem>
      <NavItem label="功能">
        <rect x="-29" y="-28" width="25" height="25" rx="5" />
        <rect x="-29" y="4" width="25" height="25" rx="5" />
        <rect x="4" y="4" width="25" height="25" rx="5" />
        <rect x="6.5" y="-26" width="20.5" height="20.5" rx="3" transform="rotate(45 16.75 -15.5)" />
      </NavItem>
      <NavItem label="加自选" className="text-[#ea5504]">
        <circle r="31" />
        <path d="M-16 0H16M0 -16V16" />
      </NavItem>
      <div className="absolute left-[378px] bottom-[3px] w-[504px] h-[10px] rounded-full bg-[#babbbd]" />
    </div>
  );
}

export default function App() {
  return (
    <div className="w-[1260px] h-[2800px] overflow-hidden bg-white font-[Roboto,'Noto_Sans_CJK_SC',sans-serif]">
      <StatusBar />
      <Header />
      <Quote />
      <Notice />
      <Tabs />
      <AverageRow />
      <PriceChart />
      <VolumeRow />
      <VolumeChart />
      <MacdRow />
      <MacdChart />
      <BollRow />
      <BollChart />
      <div className="flex items-center justify-between h-[95px] pl-[17px] pr-[17px] pb-[21px] text-[45px] text-[#888888]">
        <Fit className="w-[200px]">20250619</Fit>
        <Fit className="w-[200px]">20250814</Fit>
      </div>
      <Banner />
      <BottomNav />
    </div>
  );
}
